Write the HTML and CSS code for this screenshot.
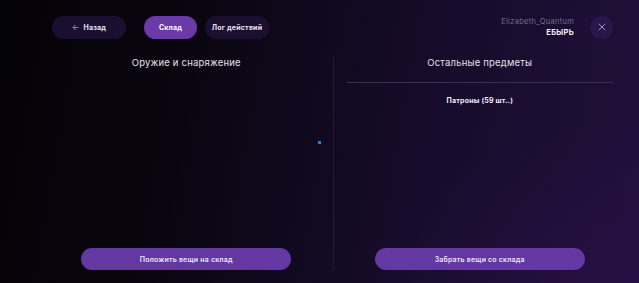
FILE: index.html
```html
<!DOCTYPE html>
<html>
<head>
	<title>Склад</title>
	<meta charset="utf-8">
	<link rel="stylesheet" href="styles.css">
</head>
<body>
<div class="page">
	<div class="top">
		<div class="nav">
			<a class="btn back"><span class="arrow">&larr;</span> Назад</a>
			<div class="tabs">
				<a class="btn tab current">Склад</a>
				<a class="btn tab">Лог действий</a>
			</div>
		</div>
		<div class="user">
			<div class="who">
				<div class="login">Elizabeth_Quantum</div>
				<div class="nick">ЕБЫРЬ</div>
			</div>
			<a class="close">
				<svg width="8" height="8" viewBox="0 0 8 8"><path d="M1 1L7 7M7 1L1 7" stroke="#9c8cb8" stroke-width="1" stroke-linecap="round"/></svg>
			</a>
		</div>
	</div>
	<div class="main">
		<div class="col left">
			<h2>Оружие и снаряжение</h2>
			<div class="list"></div>
			<a class="action">Положить вещи на склад</a>
			<span class="dot"></span>
		</div>
		<div class="line"></div>
		<div class="col right">
			<h2>Остальные предметы</h2>
			<div class="sep"></div>
			<div class="list">
				<div class="item">Патроны (59 шт..)</div>
			</div>
			<a class="action">Забрать вещи со склада</a>
		</div>
	</div>
</div>
</body>
</html>
```
FILE: styles.css
```css
*{margin:0;padding:0;box-sizing:border-box;}
html,body{height:100%;}
body{
	font-family:Inter,"Noto Sans",sans-serif;
	color:#fff;
	background:
		radial-gradient(ellipse 60% 80% at 100% 100%,rgba(40,16,70,0.7),transparent 70%),
		linear-gradient(100deg,#040306 0%,#0a0611 30%,#150b27 60%,#21103c 100%);
	overflow:hidden;
}
.page{
	display:flex;
	flex-direction:column;
	height:100%;
}
.top{
	display:flex;
	justify-content:space-between;
	align-items:center;
	padding:15px 26px 0 52px;
	height:39px;
}
.nav{
	display:flex;
	align-items:center;
	gap:18px;
}
.tabs{
	display:flex;
	gap:8px;
}
.btn{
	display:flex;
	align-items:center;
	justify-content:center;
	height:23px;
	border-radius:12px;
	background:#1b0f2f;
	font-size:7px;
	font-weight:700;
	letter-spacing:0.2px;
	color:#e8e2f2;
	cursor:pointer;
}
.back{width:74px;gap:4px;}
.back .arrow{font-weight:400;color:#a898c4;font-size:8px;}
.tab{width:64px;}
.tab.current{width:53px;background:#6a3aa8;color:#fff;}
.user{
	display:flex;
	align-items:center;
	gap:16px;
}
.who{text-align:right;line-height:11px;}
.login{font-size:7.5px;color:#766990;letter-spacing:0.3px;}
.nick{font-size:7.5px;font-weight:700;color:#f2eef8;letter-spacing:0.3px;}
.close{
	display:flex;
	align-items:center;
	justify-content:center;
	width:23px;
	height:23px;
	border-radius:50%;
	background:#28164a;
}
.main{
	flex:1;
	display:grid;
	grid-template-columns:1fr 1px 1fr;
	padding:17px 13px 13px 40px;
}
.line{background:#231a33;margin:1px 0 0;}
.col{
	position:relative;
	display:flex;
	flex-direction:column;
	align-items:center;
}
.col h2{
	font-size:9.5px;
	font-weight:400;
	color:#e4e0ec;
	line-height:14px;
	letter-spacing:0.2px;
}
.sep{
	align-self:stretch;
	height:1px;
	background:#3a2d52;
	margin:12px 13px 0;
}
.list{flex:1;padding-top:13px;}
.item{font-size:7px;font-weight:700;color:#f2eef8;letter-spacing:0.2px;}
.action{
	display:flex;
	align-items:center;
	justify-content:center;
	width:210px;
	height:22px;
	border-radius:11px;
	background:#6438a2;
	font-size:7px;
	font-weight:600;
	letter-spacing:0.2px;
	color:#ece6f6;
	cursor:pointer;
}
.dot{
	position:absolute;
	left:278px;
	top:85px;
	width:3px;
	height:3px;
	background:#1e80dc;
}
```
